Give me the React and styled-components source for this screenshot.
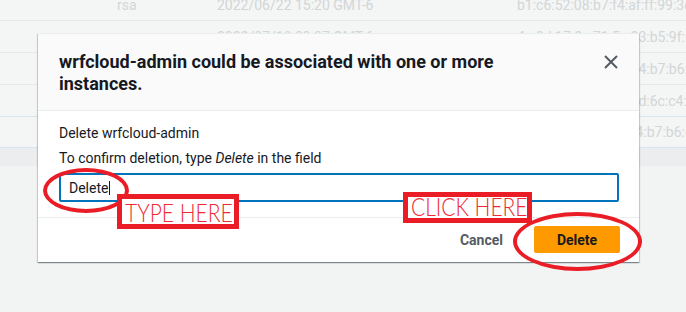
import React from "react";
import styled, { createGlobalStyle } from "styled-components";

const GlobalStyle = createGlobalStyle`
  html, body {
    margin: 0;
    padding: 0;
    background: #f2f3f3;
  }
  body {
    font-family: Roboto, "Liberation Sans", Arial, sans-serif;
    color: #16191f;
  }
`;

const Page = styled.div`
  position: relative;
  width: 686px;
  height: 312px;
  overflow: hidden;
  background: #f2f3f3;
`;

// faded table behind the modal
const Table = styled.div`
  margin-top: -11px;
  display: flex;
  flex-direction: column;
`;

const TableRow = styled.div`
  display: grid;
  grid-template-columns: 100px 300px 1fr;
  padding-left: 117px;
  height: 32px;
  align-items: center;
  box-sizing: border-box;
  background: #f4f5f5;
  border-bottom: 1px solid ${(p) => (p.selected ? "#d8e4ee" : "#e7e9e9")};
  margin-top: ${(p) => (p.selected ? "-1px" : "0")};
  border-top: ${(p) => (p.selected ? "1px solid #d8e4ee" : "none")};
  font-size: 14px;
  color: #d2d6d6;
  white-space: nowrap;
  overflow: hidden;
`;

const Cell = styled.span`
  overflow: visible;
`;

const TableEnd = styled.div`
  height: 18px;
  background: #ecedee;
`;

// modal
const Modal = styled.div`
  position: absolute;
  z-index: 1;
  left: 38px;
  top: 33px;
  width: 601px;
  background: #fff;
  border-top: 1px solid #eaeded;
  box-shadow: 0 1px 1px 0 rgba(0, 28, 36, 0.3),
    1px 1px 1px 0 rgba(0, 28, 36, 0.15), -1px 1px 1px 0 rgba(0, 28, 36, 0.15);
`;

const Header = styled.div`
  display: flex;
  align-items: flex-start;
  justify-content: space-between;
  background: #fafafa;
  border-bottom: 1px solid #eaeded;
  padding: 17px 20px 15px 21px;
`;

const Title = styled.h2`
  margin: 0;
  max-width: 500px;
  font-size: 18px;
  line-height: 22px;
  font-weight: 700;
  color: #16191f;
`;

const CloseButton = styled.button`
  border: none;
  background: none;
  padding: 0;
  margin-top: 3px;
  width: 16px;
  height: 16px;
  display: flex;
  color: #545b64;
  cursor: pointer;
`;

const Body = styled.div`
  padding: 11px 20px 15px 21px;
  font-size: 14px;
  line-height: 22px;
`;

const Line = styled.p`
  margin: 0 0 ${(p) => p.gap || 0}px;
`;

const Field = styled.div`
  margin-top: 4px;
  height: 29px;
  box-sizing: border-box;
  border: 2px solid #0073bb;
  border-radius: 2px;
  padding: 0 8px;
  display: flex;
  align-items: center;
  font-size: 14px;
  color: #16191f;
`;

const Caret = styled.span`
  display: inline-block;
  width: 1px;
  height: 14px;
  background: #16191f;
  margin-left: 1px;
`;

const Footer = styled.div`
  display: flex;
  justify-content: flex-end;
  align-items: center;
  gap: 10px;
  border-top: 1px solid #eaeded;
  padding: 8px 19px 9px 20px;
`;

const Button = styled.button`
  font-family: inherit;
  font-size: 14px;
  font-weight: 700;
  line-height: 19px;
  height: 27px;
  padding: 4px 20px;
  border-radius: 2px;
  border: 1px solid ${(p) => (p.primary ? "#ff9900" : "transparent")};
  background: ${(p) => (p.primary ? "#ff9900" : "transparent")};
  color: ${(p) => (p.primary ? "#16191f" : "#545b64")};
  min-width: ${(p) => (p.primary ? "86px" : "auto")};
  cursor: pointer;
`;

// red annotations drawn over the screenshot
const Ring = styled.div`
  position: absolute;
  z-index: 2;
  left: ${(p) => p.x}px;
  top: ${(p) => p.y}px;
  width: ${(p) => p.w}px;
  height: ${(p) => p.h}px;
  box-sizing: border-box;
  border: 4px solid #ea1c25;
  border-radius: 50%;
`;

const Tag = styled.div`
  position: absolute;
  z-index: 2;
  left: ${(p) => p.x}px;
  top: ${(p) => p.y}px;
  width: ${(p) => p.w}px;
  height: ${(p) => p.h}px;
  box-sizing: border-box;
  border: 5px solid #ea1c25;
  background: #fff;
  display: flex;
  align-items: flex-end;
  padding: 0 0 0 3px;
  overflow: hidden;
`;

const TagText = styled.span`
  display: inline-block;
  font-family: Lato, Roboto, "Liberation Sans", sans-serif;
  font-weight: 300;
  font-size: 25px;
  line-height: 24px;
  color: #ee2a33;
  white-space: nowrap;
  transform: scaleX(0.84);
  transform-origin: left bottom;
`;

const rows = [
  { name: "rsa", date: "2022/06/22 15:20 GMT-6", fp: "b1:c6:52:08:b7:f4:af:ff:99:3e:1a:60" },
  { name: "rsa", date: "2022/07/18 09:37 GMT-6", fp: "4a:0d:17:2e:71:5c:23:b5:9f:60:2c" },
  { name: "rsa", date: "2022/07/19 11:02 GMT-6", fp: "e5:30:8c:91:d2:6a:14:b7:b6:5e:81" },
  { name: "rsa", date: "2022/07/20 14:45 GMT-6", fp: "73:a1:4c:e8:05:b2:0d:6c:c4:17:3a" },
  { name: "rsa", date: "2022/07/21 08:12 GMT-6", fp: "c2:5d:9e:10:7f:38:a4:b7:b6:e9:02" },
];

const CloseIcon = () => (
  <svg width="16" height="16" viewBox="0 0 16 16" fill="none">
    <path d="M2 2l12 12M14 2L2 14" stroke="currentColor" strokeWidth="2" />
  </svg>
);

export default function App() {
  return (
    <>
      <GlobalStyle />
      <Page>
        <Table>
          {rows.map((r, i) => (
            <TableRow key={i} selected={i === 4}>
              <Cell>{r.name}</Cell>
              <Cell>{r.date}</Cell>
              <Cell>{r.fp}</Cell>
            </TableRow>
          ))}
          <TableEnd />
        </Table>

        <Modal>
          <Header>
            <Title>wrfcloud-admin could be associated with one or more instances.</Title>
            <CloseButton aria-label="Close">
              <CloseIcon />
            </CloseButton>
          </Header>
          <Body>
            <Line gap={3}>Delete wrfcloud-admin</Line>
            <Line>
              To confirm deletion, type <i>Delete</i> in the field
            </Line>
            <Field>
              Delete
              <Caret />
            </Field>
          </Body>
          <Footer>
            <Button>Cancel</Button>
            <Button primary>Delete</Button>
          </Footer>
        </Modal>

        <Ring x={43} y={168} w={86} h={45} />
        <Tag x={117} y={194} w={122} h={35}>
          <TagText>TYPE HERE</TagText>
        </Tag>
        <Tag x={403} y={192} w={129} h={31}>
          <TagText>CLICK HERE</TagText>
        </Tag>
        <Ring x={513} y={212} w={129} h={59} />
      </Page>
    </>
  );
}
